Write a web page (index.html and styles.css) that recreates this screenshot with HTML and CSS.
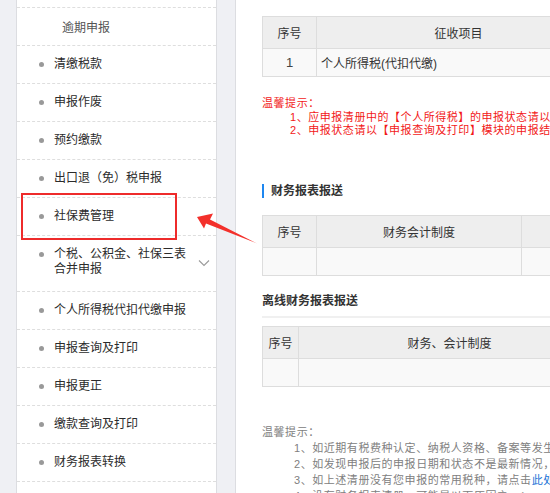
FILE: index.html
```html
<!DOCTYPE html>
<html lang="zh-CN">
<head>
<meta charset="utf-8">
<title>申报</title>
<link rel="stylesheet" href="styles.css">
</head>
<body>
<div class="page">
  <div class="edge"></div>
  <nav class="sidebar">
    <div class="nav-top"></div>
    <div class="nav-item sub">逾期申报</div>
    <div class="nav-item"><span class="dot"></span><span class="label">清缴税款</span></div>
    <div class="nav-item"><span class="dot"></span><span class="label">申报作废</span></div>
    <div class="nav-item"><span class="dot"></span><span class="label">预约缴款</span></div>
    <div class="nav-item"><span class="dot"></span><span class="label">出口退（免）税申报</span></div>
    <div class="nav-item marked"><span class="dot"></span><span class="label">社保费管理</span><span class="mark-box"></span></div>
    <div class="nav-item tall"><span class="dot"></span><span class="label wrap">个税、公积金、社保三表合并申报</span>
      <svg class="chev" width="12" height="8" viewBox="0 0 12 8"><path d="M1 1.5 L6 6.5 L11 1.5" fill="none" stroke="#9a9a9a" stroke-width="1.1"/></svg>
    </div>
    <div class="nav-item"><span class="dot"></span><span class="label">个人所得税代扣代缴申报</span></div>
    <div class="nav-item"><span class="dot"></span><span class="label">申报查询及打印</span></div>
    <div class="nav-item"><span class="dot"></span><span class="label">申报更正</span></div>
    <div class="nav-item"><span class="dot"></span><span class="label">缴款查询及打印</span></div>
    <div class="nav-item"><span class="dot"></span><span class="label">财务报表转换</span></div>
    <div class="nav-item"></div>
  </nav>
  <div class="gap"></div>
  <main class="main">
    <table class="grid t1">
      <tr class="head"><th class="c-no">序号</th><th class="c-name">征收项目</th><th></th></tr>
      <tr class="body"><td class="c-no num">1</td><td class="left">个人所得税(代扣代缴)</td><td></td></tr>
    </table>
    <div class="tips red">
      <div>温馨提示：</div>
      <div class="ind">1、应申报清册中的【个人所得税】的申报状态请以</div>
      <div class="ind">2、申报状态请以【申报查询及打印】模块的申报结</div>
    </div>
    <h3 class="sec bar">财务报表报送</h3>
    <table class="grid t2">
      <tr class="head"><th class="c-no">序号</th><th class="c-sys">财务会计制度</th><th></th></tr>
      <tr class="body"><td></td><td></td><td></td></tr>
    </table>
    <h3 class="sec line">离线财务报表报送</h3>
    <table class="grid t3">
      <tr class="head"><th class="c-no2">序号</th><th class="c-sys2">财务、会计制度</th></tr>
      <tr class="body"><td></td><td></td></tr>
    </table>
    <div class="tips gray">
      <div>温馨提示：</div>
      <div class="ind">1、如近期有税费种认定、纳税人资格、备案等发生</div>
      <div class="ind">2、如发现申报后的申报日期和状态不是最新情况，</div>
      <div class="ind">3、如上述清册没有您申报的常用税种，请点击<span class="link">此处</span></div>
      <div class="ind">4、没有财务报表清册，可能是以下原因之一：</div>
    </div>
  </main>
</div>
<svg class="arrow" width="550" height="493" viewBox="0 0 550 493">
  <polygon points="197,217 213,213.5 210,219.5 257,243.5 206,223.5 204,228.5" fill="#f3302b"/>
</svg>
</body>
</html>
```

FILE: styles.css
```css
html, body {
  margin: 0;
  padding: 0;
  width: 550px;
  height: 493px;
  overflow: hidden;
  background: #eff0f4;
  font-family: "Liberation Sans", "Noto Sans CJK SC", sans-serif;
  font-size: 12px;
  color: #333;
}

.page {
  display: flex;
  height: 493px;
  position: relative;
}

.edge {
  width: 16px;
  flex: none;
  background: #eff0f4;
}

.sidebar {
  width: 199px;
  flex: none;
  background: #fff;
  border-left: 1px solid #dcdde1;
  border-right: 1px solid #dcdde1;
  overflow: hidden;
}

.nav-top {
  height: 7px;
  border-bottom: 1px dashed #dedede;
}

.nav-item {
  position: relative;
  height: 37px;
  border-bottom: 1px dashed #dedede;
  display: flex;
  align-items: center;
  padding-left: 22px;
  color: #2b2b2b;
}

.nav-item.sub {
  padding-left: 45px;
  color: #555;
}

.nav-item.tall {
  align-items: flex-start;
  padding-top: 11px;
  box-sizing: border-box;
  height: 56px;
}

.nav-item.tall .dot {
  margin-top: 5px;
}

.dot {
  width: 5px;
  height: 5px;
  border-radius: 50%;
  background: #999;
  flex: none;
  margin-right: 10px;
}

.label {
  line-height: 15px;
}

.label.wrap {
  width: 134px;
}

.chev {
  margin-left: 10px;
  margin-top: 12px;
}

.mark-box {
  position: absolute;
  left: 4px;
  top: -5px;
  width: 152px;
  height: 43px;
  border: 2px solid #ee2b2b;
}

.gap {
  width: 18px;
  flex: none;
  background: #eff0f4;
}

.main {
  flex: 1;
  background: #fff;
  border-left: 1px solid #dcdde1;
  padding: 16px 0 0 26px;
  overflow: hidden;
  min-width: 0;
}

.grid {
  border-collapse: collapse;
  table-layout: fixed;
}

.grid th, .grid td {
  border: 1px solid #dddddd;
  padding: 0;
  font-weight: normal;
  color: #333;
  white-space: nowrap;
}

.grid .head th {
  background: #eeeeee;
  height: 31px;
  text-align: center;
}

.grid .body td {
  background: #f9f9f9;
  height: 27px;
}

.t1 { width: 480px; }
.t1 .c-no { width: 53px; }
.t1 .c-name { width: 283px; }
.t1 .num { text-align: center; font-size: 13px; color: #444; }
.t1 .left { padding-left: 4px; }

.t2 { width: 420px; }
.t2 .c-no { width: 53px; }
.t2 .c-sys { width: 204px; }

.t3 { width: 337px; }
.t3 .c-no2 { width: 35px; }
.t3 .c-sys2 { width: 301px; }

.tips {
  font-size: 11px;
  letter-spacing: 0.55px;
  white-space: nowrap;
}

.tips .ind {
  padding-left: 28px;
}

.tips.red {
  color: #f21818;
  line-height: 13.5px;
  margin-top: 20px;
}

.tips.gray {
  color: #808080;
  line-height: 16px;
  margin-top: 37px;
}

.tips.gray .ind {
  padding-left: 32px;
}

.link {
  color: #1a72d6;
}

.sec {
  margin: 0;
  font-size: 12px;
  font-weight: bold;
  color: #333;
  line-height: 14px;
}

.sec.bar {
  margin-top: 46px;
  margin-bottom: 17px;
  border-left: 2px solid #1e87f0;
  padding-left: 7px;
}

.sec.line {
  margin-top: 18px;
  margin-bottom: 8px;
  padding-bottom: 8px;
  border-bottom: 2px solid #f0f0f0;
  width: 420px;
}

.arrow {
  position: absolute;
  left: 0;
  top: 0;
  pointer-events: none;
}
```
